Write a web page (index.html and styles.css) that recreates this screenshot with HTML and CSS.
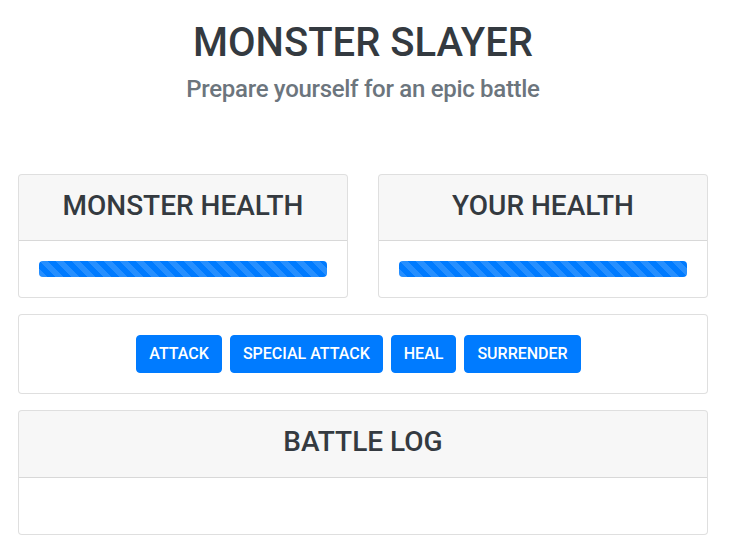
FILE: index.html
```html
<!DOCTYPE html>
<html lang="en">
<head>
<meta charset="utf-8">
<title>Monster Slayer</title>
<link rel="stylesheet" href="styles.css">
</head>
<body>
<div class="page">
  <header class="intro">
    <h1 class="title">MONSTER SLAYER</h1>
    <h4 class="subtitle">Prepare yourself for an epic battle</h4>
  </header>
  <div class="health-row">
    <section class="card">
      <div class="card-header"><h3 class="card-title">MONSTER HEALTH</h3></div>
      <div class="card-body">
        <div class="progress"><div class="progress-bar" style="width: 100%"></div></div>
      </div>
    </section>
    <section class="card">
      <div class="card-header"><h3 class="card-title">YOUR HEALTH</h3></div>
      <div class="card-body">
        <div class="progress"><div class="progress-bar" style="width: 100%"></div></div>
      </div>
    </section>
  </div>
  <section class="card">
    <div class="card-body controls">
      <button class="btn">ATTACK</button>
      <button class="btn">SPECIAL ATTACK</button>
      <button class="btn">HEAL</button>
      <button class="btn">SURRENDER</button>
    </div>
  </section>
  <section class="card">
    <div class="card-header"><h3 class="card-title">BATTLE LOG</h3></div>
    <div class="card-body">
      <ul class="log"></ul>
    </div>
  </section>
</div>
</body>
</html>
```

FILE: styles.css
```css
* { box-sizing: border-box; }
html, body { margin: 0; padding: 0; background: #fff; }
body {
  font-family: Roboto, "Liberation Sans", Arial, sans-serif;
  color: #343a40;
  font-size: 16px;
  line-height: 1.5;
}
.page {
  width: 690px;
  margin-left: 18px;
  padding-top: 19px;
  display: flex;
  flex-direction: column;
  gap: 16px;
}
.intro {
  text-align: center;
  margin-bottom: 54px;
}
.title {
  margin: 0 0 8px;
  font-size: 40px;
  line-height: 48px;
  font-weight: 500;
  color: #343a40;
}
.subtitle {
  margin: 0;
  font-size: 24px;
  line-height: 28.8px;
  font-weight: 500;
  letter-spacing: -0.3px;
  color: #6c757d;
}
.health-row {
  display: grid;
  grid-template-columns: 1fr 1fr;
  gap: 30px;
}
.card {
  background: #fff;
  border: 1px solid rgba(0,0,0,.125);
  border-radius: 4px;
  overflow: hidden;
}
.card-header {
  background: rgba(0,0,0,.03);
  border-bottom: 1px solid rgba(0,0,0,.125);
  padding: 14px 20px 10px;
  text-align: center;
}
.card-title {
  margin: 0 0 8px;
  font-size: 28px;
  line-height: 33.6px;
  font-weight: 500;
  color: #343a40;
}
.card-body {
  padding: 20px;
}
.progress {
  height: 16px;
  background: #e9ecef;
  border-radius: 4px;
  overflow: hidden;
  display: flex;
}
.progress-bar {
  height: 100%;
  background-color: #007bff;
  background-image: linear-gradient(45deg, rgba(255,255,255,.15) 25%, transparent 25%, transparent 50%, rgba(255,255,255,.15) 50%, rgba(255,255,255,.15) 75%, transparent 75%, transparent);
  background-size: 16px 16px;
}
.controls {
  display: flex;
  justify-content: center;
  gap: 8px;
  padding-right: 29px;
}
.btn {
  font-family: inherit;
  font-size: 16px;
  line-height: 24px;
  font-weight: 500;
  color: #fff;
  background: #007bff;
  border: 1px solid #007bff;
  border-radius: 4px;
  padding: 6px 12px;
  cursor: pointer;
}
.log {
  margin: 0 0 16px;
  padding: 0;
  list-style: none;
}
```
